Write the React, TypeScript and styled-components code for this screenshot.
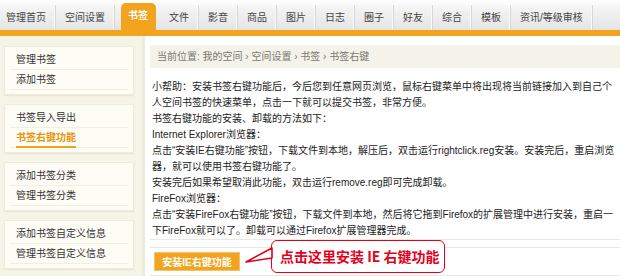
import React from 'react'
import styled, { createGlobalStyle } from 'styled-components'

const tabs = ['管理首页', '空间设置', '书签', '文件', '影音', '商品', '图片', '日志', '圈子', '好友', '综合', '模板', '资讯/等级审核']

const menus = [
  ['管理书签', '添加书签'],
  ['书签导入导出', '书签右键功能'],
  ['添加书签分类', '管理书签分类'],
  ['添加书签自定义信息', '管理书签自定义信息'],
]

const helpLines = [
  '小帮助：安装书签右键功能后，今后您到任意网页浏览，鼠标右键菜单中将出现将当前链接加入到自己个',
  '人空间书签的快速菜单，点击一下就可以提交书签，非常方便。',
  '书签右键功能的安装、卸载的方法如下：',
  'Internet Explorer浏览器：',
  '点击“安装IE右键功能”按钮，下载文件到本地，解压后，双击运行rightclick.reg安装。安装完后，重启浏览',
  '器，就可以使用书签右键功能了。',
  '安装完后如果希望取消此功能，双击运行remove.reg即可完成卸载。',
  'FireFox浏览器：',
  '点击“安装FireFox右键功能”按钮，下载文件到本地，然后将它拖到Firefox的扩展管理中进行安装，重启一',
  '下FireFox就可以了。卸载可以通过Firefox扩展管理器完成。',
]

export default function App() {
  return (
    <>
      <GlobalStyle />
      <TabBar>
        {tabs.map((t) => (
          <Tab key={t} $active={t === '书签'}>{t}</Tab>
        ))}
        <TabFill />
      </TabBar>
      <Body>
        <Sidebar>
          {menus.map((group, i) => (
            <MenuCard key={i}>
              {group.map((item) => (
                <MenuItem key={item} $active={item === '书签右键功能'}>
                  <span>{item}</span>
                </MenuItem>
              ))}
            </MenuCard>
          ))}
        </Sidebar>
        <Main>
          <Breadcrumb>当前位置: 我的空间 › 空间设置 › 书签 › 书签右键</Breadcrumb>
          <Help>
            {helpLines.map((l, i) => (
              <div key={i}>{l}</div>
            ))}
          </Help>
          <ButtonRow>
            <InstallButton>安装IE右键功能</InstallButton>
            <Callout>
              <Tail width="28" height="18" viewBox="0 0 28 18">
                <polygon points="27,1 1,15 27,11" fill="#fff" stroke="#e4001b" strokeWidth="1.6" strokeLinejoin="round" />
              </Tail>
              点击这里安装 IE 右键功能
            </Callout>
          </ButtonRow>
        </Main>
      </Body>
    </>
  )
}

const GlobalStyle = createGlobalStyle`
  body {
    margin: 0;
    font-family: "Liberation Sans", "Noto Sans CJK SC", sans-serif;
    font-size: 10px;
    color: #333;
    background: #fff;
  }
`

const TabBar = styled.div`
  display: flex;
  align-items: flex-end;
  height: 30px;
  background: linear-gradient(#ffffff, #f3f3f3 30%, #e4e4e4);
  border-bottom: 6px solid #f2a41f;
`

const Tab = styled.div<{ $active?: boolean }>`
  height: ${p => (p.$active ? '27px' : '25px')};
  line-height: 25px;
  padding: 0 ${p => (p.$active ? '7px' : '9px')};
  margin: ${p => (p.$active ? '0 4px 0 6px' : '0')};
  white-space: nowrap;
  color: ${p => (p.$active ? '#fff' : '#444')};
  font-weight: ${p => (p.$active ? 'bold' : 'normal')};
  background: ${p => (p.$active ? '#f2a41f' : 'transparent')};
  border-radius: ${p => (p.$active ? '5px 5px 0 0' : '0')};
  border-right: 1px solid ${p => (p.$active ? '#f2a41f' : '#d6d6d6')};
  box-shadow: ${p => (p.$active ? 'none' : 'inset -1px 0 0 #fafafa')};

  &:first-child {
    padding-left: 6px;
  }
`

const TabFill = styled.div`
  flex: 1;
`

const Body = styled.div`
  display: flex;
  height: 240px;
  overflow: hidden;
`

const Sidebar = styled.div`
  width: 145px;
  flex-shrink: 0;
  box-sizing: border-box;
  padding: 10px 8px 0 4px;
  background: #f6f3e7;
  border-right: 3px solid #efebdc;
  display: flex;
  flex-direction: column;
  gap: 9px;
`

const MenuCard = styled.div`
  background: #fdfcf5;
  border: 1px solid #efebdc;
  box-shadow: 0 1px 1px #ebe7d6;
  padding: 3px 5px 4px;
`

const MenuItem = styled.div<{ $active?: boolean }>`
  height: 19px;
  line-height: 19px;
  padding-left: 6px;
  border-bottom: 1px solid #f1eee3;
  color: ${p => (p.$active ? '#e8940c' : '#333')};
  font-weight: ${p => (p.$active ? 'bold' : 'normal')};

  span {
    display: inline-block;
    line-height: 16px;
    border-bottom: ${p => (p.$active ? '2px solid #f2a41f' : 'none')};
  }
`

const Main = styled.div`
  flex: 1;
  padding: 9px 0 0 5px;
  background: #fff;
`

const Breadcrumb = styled.div`
  height: 23px;
  line-height: 23px;
  padding-left: 7px;
  background: #f4f2e9;
  color: #7a7a72;
`

const Help = styled.div`
  margin-top: 11px;
  padding-left: 2px;
  line-height: 16px;
  white-space: nowrap;
  color: #222;
  border-bottom: 1px solid #ebe8dc;
`

const ButtonRow = styled.div`
  position: relative;
  margin-top: 7px;
  border-top: 1px solid #ebe8dc;
  border-bottom: 1px solid #ebe8dc;
  padding: 4px 0 4px 4px;
  display: flex;
`

const InstallButton = styled.button`
  height: 19px;
  width: 86px;
  padding: 0;
  border: 1px solid #f5c070;
  background: #f2a41f;
  color: #fff;
  font-family: inherit;
  font-size: 10px;
  font-weight: bold;
`

const Callout = styled.div`
  position: absolute;
  left: 121px;
  top: -8px;
  width: 174px;
  height: 33px;
  box-sizing: border-box;
  border: 1.5px solid #e4001b;
  border-radius: 6px;
  background: #fff;
  color: #e4001b;
  font-family: "Noto Sans CJK SC", sans-serif;
  font-size: 14px;
  font-weight: bold;
  line-height: 30px;
  padding-left: 8px;
  white-space: nowrap;
`

const Tail = styled.svg`
  position: absolute;
  left: -27px;
  top: 6px;
`
